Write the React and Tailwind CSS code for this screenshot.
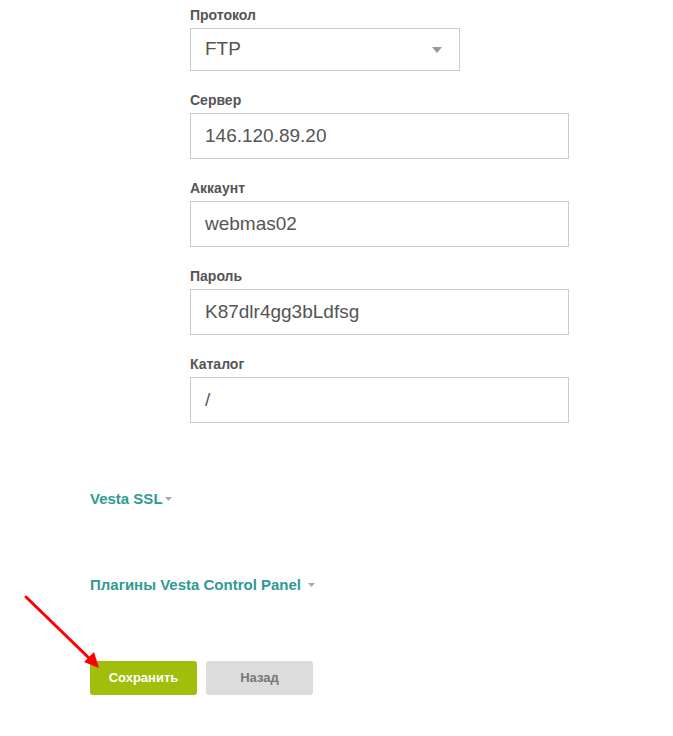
import React from "react";

function Field({ label, value, last }) {
  return (
    <div className={last ? "" : "mb-[21px]"}>
      <div className="text-[14px] leading-[16px] font-bold text-[#555] mb-[5px]">{label}</div>
      <div className="w-[379px] h-[46px] border border-[#cccccc] bg-white flex items-center pl-[14px] text-[19px] text-[#555]">
        {value}
      </div>
    </div>
  );
}

function Caret({ className }) {
  return (
    <svg className={className} width="7" height="4" viewBox="0 0 7 4">
      <path d="M0 0 L7 0 L3.5 4 Z" fill="#aaaaaa" />
    </svg>
  );
}

export default function App() {
  return (
    <div className="relative w-[673px] h-[736px] bg-white" style={{ fontFamily: '"Liberation Sans", Arial, sans-serif' }}>
      <div className="pl-[90px] pt-[7px]">
        <div className="ml-[100px]">
          <div className="mb-[21px]">
            <div className="text-[14px] leading-[16px] font-bold text-[#555] mb-[5px]">Протокол</div>
            <div className="w-[270px] h-[43px] border border-[#cccccc] bg-white flex items-center justify-between pl-[14px] pr-[17px] text-[19px] text-[#555]">
              <span>FTP</span>
              <svg width="10" height="6" viewBox="0 0 10 6">
                <path d="M0 0 L10 0 L5 6 Z" fill="#999999" />
              </svg>
            </div>
          </div>
          <Field label="Сервер" value="146.120.89.20" />
          <Field label="Аккаунт" value="webmas02" />
          <Field label="Пароль" value="K87dlr4gg3bLdfsg" />
          <Field label="Каталог" value="/" last />
        </div>

        <div className="mt-[67px] flex items-center text-[15px] leading-[17px] font-bold text-[#2f9a94]">
          <span>Vesta SSL</span>
          <Caret className="ml-[2px]" />
        </div>

        <div className="mt-[69px] flex items-center text-[15px] leading-[17px] font-bold text-[#2f9a94]">
          <span>Плагины Vesta Control Panel</span>
          <Caret className="ml-[7px]" />
        </div>

        <div className="mt-[68px] flex gap-[9px]">
          <button className="w-[107px] h-[34px] rounded-[3px] bg-[#a0be0a] text-white text-[13px] font-bold">Сохранить</button>
          <button className="w-[107px] h-[34px] rounded-[3px] bg-[#dddcdc] text-[#777] text-[13px] font-bold">Назад</button>
        </div>
      </div>

      <svg className="absolute left-0 top-0 pointer-events-none" width="673" height="736" viewBox="0 0 673 736">
        <line x1="26" y1="597" x2="90" y2="659" stroke="#ff0000" strokeWidth="3" strokeLinecap="round" />
        <path d="M99 668 L84 662 L94 652 Z" fill="#ff0000" />
      </svg>
    </div>
  );
}
